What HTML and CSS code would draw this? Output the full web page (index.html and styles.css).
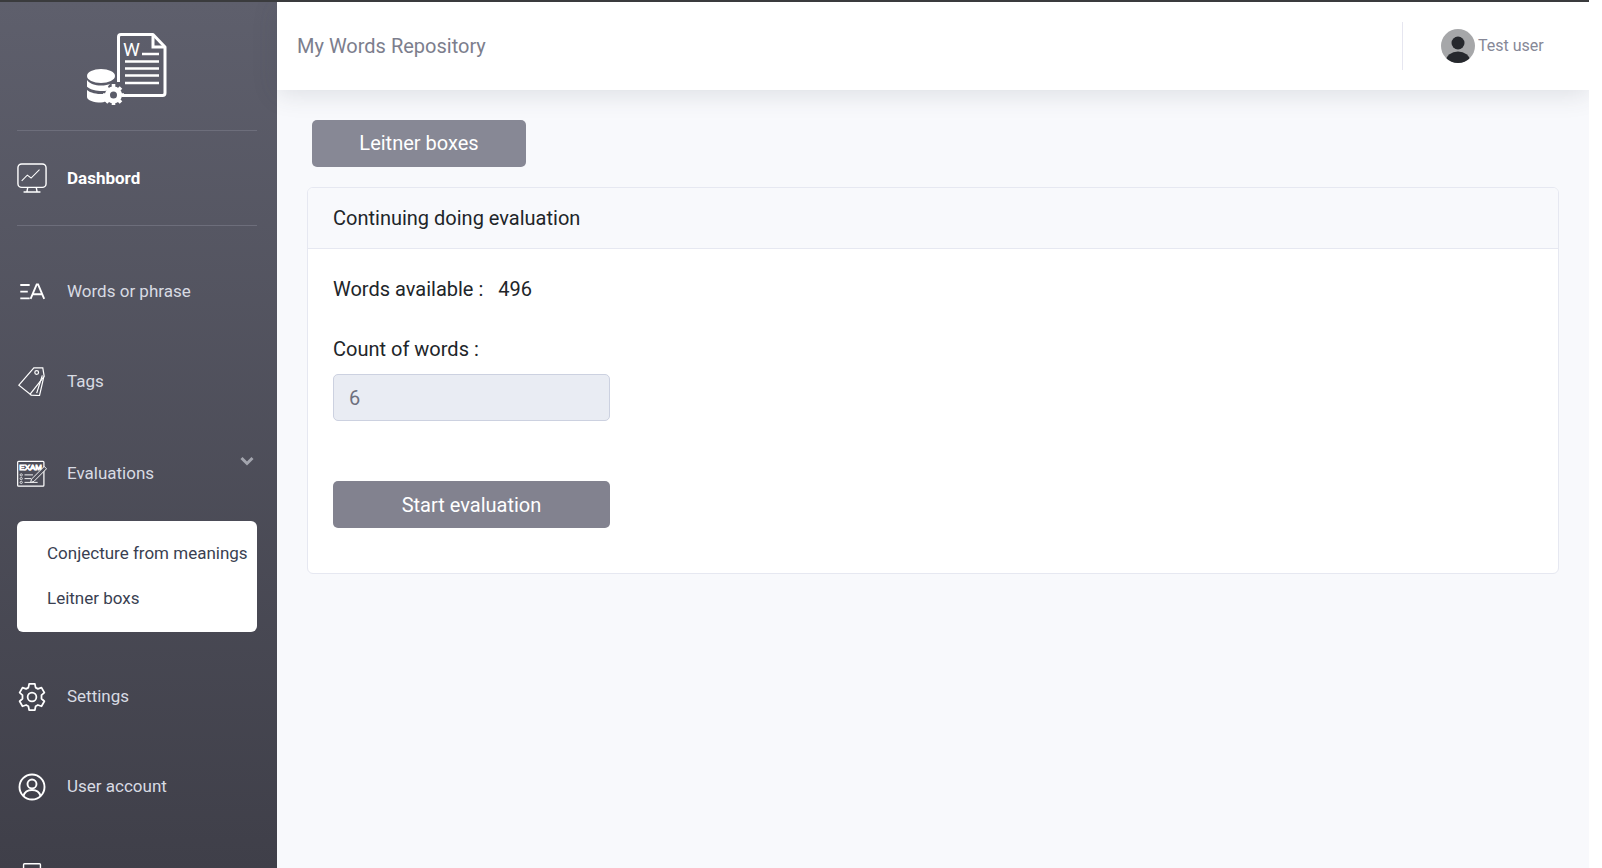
FILE: index.html
```html
<!DOCTYPE html>
<html lang="en">
<head>
    <meta charset="UTF-8">
    <meta name="viewport" content="width=device-width, initial-scale=1.0">
    <title>My Words Repository</title>
    <link rel="stylesheet" href="styles.css">
</head>
<body>
    <div class="page">
        <aside class="sidebar">
            <div class="logo">
                <svg width="80" height="72" viewBox="87 33 80 72">
                    <path d="M118.500 82V37a2.500 2.500 0 0 1 2.500-2.500h32L165 47v46a2.500 2.500 0 0 1-2.500 2.500H122" fill="none" stroke="#fff" stroke-width="3" stroke-linejoin="round"/>
                    <path d="M153 35V47H165" fill="none" stroke="#fff" stroke-width="3"/>
                    <text x="123" y="55.500" class="logo-w">W</text>
                    <path d="M142 54h17M125 61.500h34M125 68.500h34M125 75.500h34M125 83h34" stroke="#fff" stroke-width="2.400"/>
                    <ellipse cx="101" cy="76" rx="14" ry="7" fill="#fff"/>
                    <path d="M87 80c3 4 8 5.500 14 5.500 4 0 7-.6 9.500-1.800-2 1.500-3.500 4-4 7-6 .8-15 0-19.500-4zM87 90c4 3.500 12 4.500 19 4 .2 2 1 4 2 5.500-1 1-4 3-7 3-7 0-14-2-14-5.500z" fill="#fff"/>
                    <circle cx="113.500" cy="95" r="7" fill="#5b5c69"/>
                    <circle cx="113.500" cy="95" r="6" fill="none" stroke="#fff" stroke-width="5"/>
                    <path d="M113.500 84v4M113.500 102v4M103 95h4M120 95h4M106 87.500l2.800 2.800M118.200 99.700l2.800 2.800M121 87.500l-2.800 2.800M108.800 99.700l-2.800 2.800" stroke="#fff" stroke-width="3.600"/>
                </svg>
            </div>
            <div class="divider"></div>
            <a class="nav-item nav-active">
                <svg class="nav-icon" viewBox="0 0 32 32" fill="none" stroke="#fff">
                    <rect x="1" y="1" width="30" height="25" rx="4" stroke-width="1.500"/>
                    <path d="M5 19l6-6 4 3 9-9" stroke-width="1.100"/>
                    <path d="M11.500 26l-1 5M20.500 26l1 5M7 31h18" stroke-width="1.500"/>
                </svg>
                <span>Dashbord</span>
            </a>
            <div class="divider"></div>
            <div class="nav-gap"></div>
            <a class="nav-item">
                <svg class="nav-icon" viewBox="0 0 32 32" fill="none" stroke="#fff" stroke-width="2">
                    <path d="M3.500 9.600h10M3.500 16.700h8M3.500 23.800h10"/>
                    <path d="M14.500 24.500L21 9h1.500L29 24.500M17 19.500h10"/>
                </svg>
                <span>Words or phrase</span>
            </a>
            <a class="nav-item">
                <svg class="nav-icon" viewBox="0 0 32 32" fill="none" stroke="#fff" stroke-width="1.300">
                    <path d="M18 2h9.500l1.500 9-15 19L2 20.500z"/>
                    <circle cx="21" cy="7" r="2"/>
                    <path d="M14 29.500l1 1.500 9 .5 3-13 1.500-7M21 29l6-19"/>
                </svg>
                <span>Tags</span>
            </a>
            <a class="nav-item nav-group">
                <svg class="nav-icon" viewBox="0 0 32 32" fill="none" stroke="#fff">
                    <rect x="0.700" y="3.500" width="28" height="26.500" rx="1" stroke-width="1.300"/>
                    <text x="2.500" y="12.500" class="exam-text">EXAM</text>
                    <circle cx="4.500" cy="18" r="1.200" stroke-width=".8"/>
                    <circle cx="4.500" cy="22" r="1.200" stroke-width=".8"/>
                    <circle cx="4.500" cy="26" r="1.200" stroke-width=".8"/>
                    <path d="M8 18h9M8 22h7M8 26h14" stroke-width="1"/>
                    <path d="M14.500 26l1-3.500L29 9l2.500 2.500L18 25z" fill="#4f505b" stroke-width="1"/>
                </svg>
                <span>Evaluations</span>
                <svg class="chevron" width="14" height="10" viewBox="0 0 14 10">
                    <path d="M1.500 2l5.500 5.500 5.500-5.500" fill="none" stroke="#a3a5ae" stroke-width="3"/>
                </svg>
            </a>
            <div class="sub-menu">
                <a>Conjecture from meanings</a>
                <a>Leitner boxs</a>
            </div>
            <a class="nav-item">
                <svg class="nav-icon nav-icon-low" viewBox="0 0 24 24" fill="none" stroke="#fff" stroke-width="1.400">
                    <circle cx="12" cy="12" r="3.500"/>
                    <path d="M9.700 1.500h4.600l.6 3 1.800 1 2.900-1 2.300 4-2.300 2v2.900l2.300 2-2.300 4-2.900-1-1.800 1-.6 3H9.700l-.6-3-1.800-1-2.900 1-2.300-4 2.300-2v-2.900l-2.300-2 2.300-4 2.900 1 1.800-1z" stroke-linejoin="round"/>
                </svg>
                <span>Settings</span>
            </a>
            <a class="nav-item">
                <svg class="nav-icon nav-icon-low" viewBox="-1 -1 30 30" fill="none" stroke="#fff" stroke-width="1.900">
                    <circle cx="14" cy="14" r="12.500"/>
                    <circle cx="14" cy="11" r="4.500"/>
                    <path d="M5.500 23c1-4 4-6 8.500-6s7.500 2 8.500 6"/>
                </svg>
                <span>User account</span>
            </a>
            <a class="nav-item">
                <svg class="nav-icon" viewBox="0 0 32 32" fill="none" stroke="#fff" stroke-width="1.500">
                    <rect x="7" y="3" width="18" height="26" rx="1"/>
                </svg>
            </a>
        </aside>

        <div class="content">
            <header class="topbar">
                <div class="app-title">My Words Repository</div>
                <div class="user-box">
                    <svg width="34" height="34" viewBox="0 0 34 34">
                        <defs>
                            <clipPath id="avatarClip"><circle cx="17" cy="17" r="17"/></clipPath>
                        </defs>
                        <circle cx="17" cy="17" r="17" fill="#a6a7a9"/>
                        <g clip-path="url(#avatarClip)" fill="#26282d">
                            <circle cx="17" cy="14" r="6.500"/>
                            <ellipse cx="17" cy="32" rx="12" ry="9.500"/>
                        </g>
                    </svg>
                    <span>Test user</span>
                </div>
            </header>

            <main class="main">
                <button class="btn btn-top">Leitner boxes</button>
                <section class="card">
                    <div class="card-header">Continuing doing evaluation</div>
                    <div class="card-body">
                        <p class="words-line">Words available : <span class="words-count">496</span></p>
                        <label class="field-label" for="wordCount">Count of words :</label>
                        <input class="field" id="wordCount" type="text" value="6" disabled>
                        <button class="btn btn-start">Start evaluation</button>
                    </div>
                </section>
            </main>
        </div>
    </div>
</body>
</html>
```

FILE: styles.css
```css
* {
    box-sizing: border-box;
}
html, body {
    margin: 0;
    height: 100%;
    overflow: hidden;
    background: #fff;
}
body {
    font-family: Roboto, "Liberation Sans", sans-serif;
    color: #212529;
}
.page {
    display: flex;
    width: 1589px;
    height: 868px;
    overflow: hidden;
    border-top: 2px solid #3a3b3d;
}

/* sidebar */
.sidebar {
    width: 277px;
    flex-shrink: 0;
    height: 866px;
    overflow: hidden;
    padding: 0 20px 0 17px;
    background: linear-gradient(180deg, #5e5f6c 0%, #3f3f49 100%);
}
.logo {
    height: 128px;
    padding: 31px 0 0 70px;
}
.logo svg {
    display: block;
}
.logo-w {
    font-family: Roboto, sans-serif;
    font-size: 19px;
    fill: #fff;
}
.exam-text {
    font-family: "Liberation Sans", sans-serif;
    font-size: 8.500px;
    fill: #fff;
}
.divider {
    height: 1px;
    background: #6d6e7b;
}
.nav-gap {
    height: 20px;
}
.nav-item {
    display: flex;
    align-items: center;
    height: 90px;
    color: #d8dbe3;
    font-size: 17px;
}
.nav-item span {
    margin-left: 20px;
}
.nav-icon {
    width: 30px;
    height: 30px;
    flex-shrink: 0;
}
.nav-icon-low {
    margin-top: 2px;
}
.nav-active {
    height: 94px;
    color: #fff;
    font-weight: 700;
}
.nav-group {
    margin-top: 2px;
    margin-bottom: 3px;
}
.chevron {
    margin-left: auto;
    margin-right: 3px;
    margin-bottom: 24px;
}
.sub-menu {
    display: flex;
    flex-direction: column;
    height: 111px;
    margin-bottom: 19px;
    padding: 10px 0 0 30px;
    background: #fff;
    border-radius: 6px;
}
.sub-menu a {
    height: 45px;
    line-height: 45px;
    font-size: 17px;
    color: #3a3f51;
    white-space: nowrap;
}

/* top bar */
.content {
    flex: 1;
    display: flex;
    flex-direction: column;
    min-width: 0;
}
.topbar {
    position: relative;
    display: flex;
    align-items: center;
    justify-content: space-between;
    height: 88px;
    padding-left: 20px;
    background: #fff;
    box-shadow: 0 4px 24px rgba(60, 62, 80, 0.14);
}
.app-title {
    font-size: 20px;
    color: #7c7e8d;
}
.user-box {
    display: flex;
    align-items: center;
    width: 187px;
    height: 48px;
    padding-left: 38px;
    border-left: 1px solid #e6e6f0;
    font-size: 16px;
    color: #868897;
}
.user-box span {
    margin-left: 3px;
    margin-bottom: 2px;
}

/* main area */
.main {
    flex: 1;
    padding: 30px 30px 0 30px;
    background: #f8f9fc;
}
.btn {
    display: block;
    height: 47px;
    border: none;
    border-radius: 5px;
    font-family: inherit;
    font-size: 20px;
    color: #fff;
    cursor: pointer;
}
.btn-top {
    width: 214px;
    margin-left: 5px;
    padding-bottom: 3px;
    background: #878895;
}
.btn-start {
    width: 277px;
    margin-top: 60px;
    background: #82828f;
}
.card {
    margin-top: 20px;
    height: 387px;
    background: #fff;
    border: 1px solid #e6e8f1;
    border-radius: 6px;
    overflow: hidden;
}
.card-header {
    height: 61px;
    padding-left: 25px;
    line-height: 60px;
    font-size: 20px;
    background: #f8f9fc;
    border-bottom: 1px solid #e6e8f1;
}
.card-body {
    padding: 0 25px;
}
.words-line {
    margin: 0;
    padding-top: 24px;
    height: 60px;
    line-height: 32px;
    font-size: 20px;
}
.words-count {
    margin-left: 10px;
}
.field-label {
    display: block;
    margin-top: 24px;
    line-height: 32px;
    font-size: 20px;
}
.field {
    display: block;
    width: 277px;
    height: 47px;
    margin-top: 9px;
    padding: 0 15px;
    font-family: inherit;
    font-size: 20px;
    color: #6e707e;
    background: #e9ecf3;
    border: 1px solid #ccd1e0;
    border-radius: 5px;
}
```
